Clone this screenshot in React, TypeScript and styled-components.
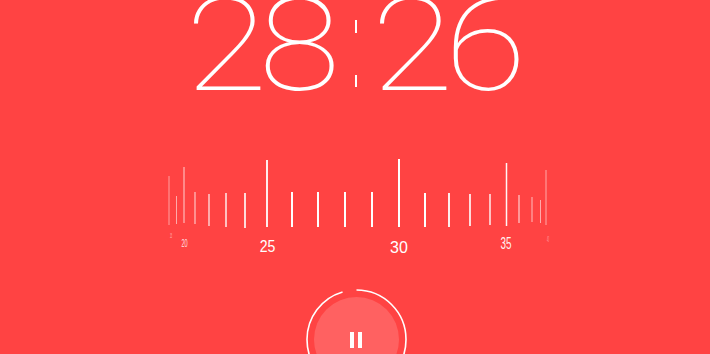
import React from "react";
import styled, { createGlobalStyle } from "styled-components";

const GlobalStyle = createGlobalStyle`
  html, body {
    margin: 0;
    padding: 0;
    background: #ff4343;
    overflow: hidden;
  }
`;

const Screen = styled.main`
  width: 710px;
  height: 354px;
  overflow: hidden;
  background: #ff4343;
  display: flex;
  flex-direction: column;
  align-items: center;
  color: #fff;
`;

const Clock = styled.div`
  margin-top: -19px;
  height: 130px;
  display: flex;
  font-family: Roboto, "Liberation Sans", sans-serif;
  font-weight: 100;
  font-size: 130px;
  line-height: 130px;
  white-space: nowrap;
  transform: translateX(1px);
`;

const Digit = styled.span`
  display: inline-block;
  width: 73px;
  text-align: center;
  transform: scaleX(1.15);
`;

const Colon = styled.span`
  position: relative;
  display: inline-block;
  width: 40px;
  height: 130px;
  color: transparent;
  text-align: center;

  &::before,
  &::after {
    content: "";
    position: absolute;
    left: 19px;
    width: 2px;
    background: #fff;
  }
  &::before {
    top: 39px;
    height: 13px;
  }
  &::after {
    top: 94px;
    height: 12px;
  }
`;

const Ruler = styled.svg`
  display: block;
  margin-top: 39px;
  width: 400px;
  height: 110px;
  overflow: visible;
`;

const Tick = styled.line`
  stroke: #fff;
  stroke-linecap: butt;
`;

const TickLabel = styled.text`
  font-family: "Liberation Sans", Arial, sans-serif;
  fill: #fff;
  text-anchor: middle;
`;

const Control = styled.div`
  position: relative;
  margin-top: 27px;
  width: 105px;
  height: 105px;
  flex: none;
  display: flex;
  align-items: center;
  justify-content: center;
  transform: translateX(1px);
`;

const ProgressRing = styled.svg`
  position: absolute;
  inset: 0;
  width: 105px;
  height: 105px;
  overflow: visible;
`;

const PauseButton = styled.button`
  width: 85px;
  height: 85px;
  border-radius: 50%;
  border: none;
  padding: 0;
  background: rgba(255, 255, 255, 0.16);
  display: flex;
  align-items: center;
  justify-content: center;
  gap: 3.5px;
  cursor: pointer;
`;

const PauseBar = styled.span`
  display: block;
  width: 4px;
  height: 16px;
  background: #fff;
`;

type TickData = { x: number; y1: number; y2: number; w: number; o: number };

const ticks: TickData[] = [
  { x: 169, y1: 176, y2: 225, w: 1, o: 0.5 },
  { x: 176.5, y1: 196, y2: 224, w: 1, o: 0.55 },
  { x: 184, y1: 167, y2: 223, w: 1, o: 0.75 },
  { x: 195, y1: 192, y2: 224, w: 1.1, o: 0.75 },
  { x: 209, y1: 194, y2: 226, w: 1.3, o: 0.85 },
  { x: 226, y1: 193, y2: 227, w: 1.5, o: 0.9 },
  { x: 245, y1: 193, y2: 228, w: 1.7, o: 0.95 },
  { x: 267, y1: 160, y2: 227, w: 1.8, o: 1 },
  { x: 292, y1: 192, y2: 227, w: 2, o: 1 },
  { x: 318, y1: 192, y2: 227, w: 2, o: 1 },
  { x: 345, y1: 192, y2: 227, w: 2, o: 1 },
  { x: 372, y1: 192, y2: 227, w: 2, o: 1 },
  { x: 399, y1: 159, y2: 227, w: 2, o: 1 },
  { x: 425, y1: 193, y2: 227, w: 2, o: 1 },
  { x: 449, y1: 193, y2: 227, w: 1.8, o: 1 },
  { x: 470, y1: 194, y2: 226, w: 1.7, o: 0.95 },
  { x: 490, y1: 194, y2: 225, w: 1.5, o: 0.9 },
  { x: 506.5, y1: 163, y2: 226, w: 1.5, o: 0.95 },
  { x: 519, y1: 195, y2: 223, w: 1.2, o: 0.75 },
  { x: 532, y1: 197, y2: 222, w: 1, o: 0.65 },
  { x: 540.5, y1: 200, y2: 223, w: 1, o: 0.55 },
  { x: 546, y1: 170, y2: 225, w: 1, o: 0.55 },
];

type LabelData = { text: string; x: number; y: number; size: number; sx: number; o: number };

const labels: LabelData[] = [
  { text: "15", x: 171, y: 238, size: 8, sx: 0.25, o: 0.6 },
  { text: "20", x: 184.5, y: 247, size: 11, sx: 0.5, o: 0.85 },
  { text: "25", x: 267.5, y: 251.5, size: 16, sx: 0.88, o: 1 },
  { text: "30", x: 399, y: 253, size: 16, sx: 1, o: 1 },
  { text: "35", x: 506, y: 249, size: 16, sx: 0.62, o: 0.95 },
  { text: "40", x: 548, y: 242, size: 9, sx: 0.2, o: 0.5 },
];

const R = 49.5;
const C = 2 * Math.PI * R;
const progress = 343 / 360;

export default function App() {
  return (
    <>
      <GlobalStyle />
      <Screen>
        <Clock>
          <Digit>2</Digit>
          <Digit>8</Digit>
          <Colon>:</Colon>
          <Digit>2</Digit>
          <Digit>6</Digit>
        </Clock>
        <Ruler viewBox="155 150 400 110">
          {ticks.map((t) => (
            <Tick
              key={t.x}
              x1={t.x}
              x2={t.x}
              y1={t.y1}
              y2={t.y2}
              strokeWidth={t.w}
              strokeOpacity={t.o}
            />
          ))}
          {labels.map((l) => (
            <TickLabel
              key={l.text}
              transform={`translate(${l.x} ${l.y}) scale(${l.sx} 1)`}
              fontSize={l.size}
              fillOpacity={l.o}
            >
              {l.text}
            </TickLabel>
          ))}
        </Ruler>
        <Control>
          <ProgressRing viewBox="0 0 105 105">
            <circle
              cx={52.5}
              cy={52.5}
              r={R}
              fill="none"
              stroke="#fff"
              strokeWidth={1.6}
              strokeDasharray={`${C * progress} ${C}`}
              transform="rotate(-90 52.5 52.5)"
            />
          </ProgressRing>
          <PauseButton aria-label="Pause">
            <PauseBar />
            <PauseBar />
          </PauseButton>
        </Control>
      </Screen>
    </>
  );
}
